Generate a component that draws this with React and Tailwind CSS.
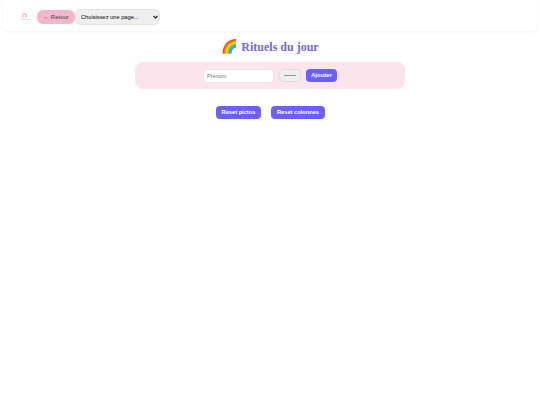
export default function App() {
  return (
    <div className="min-h-[405px] bg-white font-['Liberation_Sans',sans-serif] text-black">
      <header className="mx-[3px] flex h-[31px] items-center rounded-b-md pt-[3px] pl-[11px] shadow-[0_1px_3px_rgba(0,0,0,0.05)]">
        <div className="mb-[3px] flex w-[23px] flex-col items-center pr-[2px]">
          <svg width="7" height="6" viewBox="0 0 10 8" className="mb-[1px]">
            <path d="M1.5 8 V4.5 A3.5 3.5 0 0 1 8.5 4.5 V8 H6.5 V5 A1.5 1.5 0 0 0 3.5 5 V8 Z" fill="#f0c3d0" />
          </svg>
          <div className="h-[1px] w-[10px] bg-[#f6dde5]"></div>
        </div>
        <button className="h-[14px] w-[38px] shrink-0 rounded-md bg-[#f4b6cc] text-[6px] leading-[14px] text-[#444]">
          ← Retour
        </button>
        <div className="relative">
          <select className="block h-[16px] w-[85px] appearance-none rounded-md border border-[#e4e4e4] bg-[#efefef] pl-[5px] text-[5.7px] font-medium text-black">
            <option>Choisissez une page...</option>
          </select>
          <svg width="5" height="4" viewBox="0 0 10 8" className="pointer-events-none absolute top-[6px] right-[2px]">
            <path d="M1 2 L5 6 L9 2" fill="none" stroke="#222" strokeWidth="2.4" />
          </svg>
        </div>
      </header>

      <h1 className="mt-[7px] flex items-center justify-center gap-[3px] font-['Liberation_Serif',serif] text-[12px] leading-[18px] font-bold text-[#7468d8]">
        <span className="text-[13.5px]">🌈</span>
        <span>Rituels du jour</span>
      </h1>

      <section className="mx-auto mt-[6px] flex h-[27px] w-[270px] items-center justify-center rounded-lg bg-[#fbe4ec]">
        <input
          placeholder="Prénom"
          className="h-[14px] w-[71px] rounded border border-[#e6e6e6] bg-white px-[3px] text-[5.5px] outline-none placeholder:text-[#777]"
        />
        <div className="ml-[5px] flex h-[13px] w-[22px] items-center justify-center rounded border border-[#ddd] bg-[#efefef]">
          <div className="h-[1px] w-[12px] bg-[#999]"></div>
        </div>
        <button className="ml-[5px] h-[13px] w-[31px] rounded bg-[#6c5ffb] text-[6px] font-bold text-white">
          Ajouter
        </button>
      </section>

      <div className="mt-[17px] flex justify-center gap-[10px] pl-[1px]">
        <button className="h-[13px] w-[45px] rounded bg-[#6c5ffb] text-[5.7px] font-bold text-white">
          Reset pictos
        </button>
        <button className="h-[13px] w-[54px] rounded bg-[#6c5ffb] text-[5.7px] font-bold text-white">
          Reset colonnes
        </button>
      </div>
    </div>
  )
}
